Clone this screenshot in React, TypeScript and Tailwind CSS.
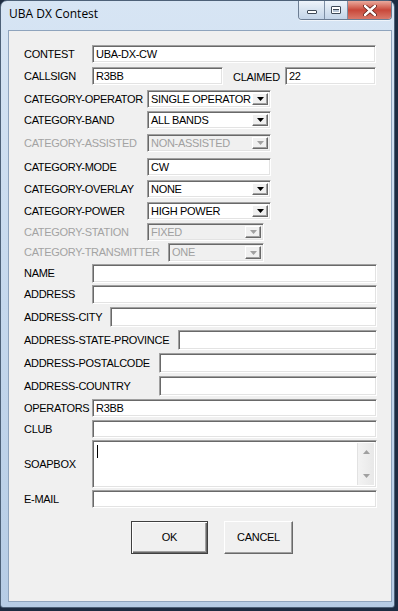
import React from 'react';

type Kind = 'input' | 'select';

type RowDef = {
  label: string;
  kind: Kind;
  value?: string;
  labelW: string;
  fieldW: string;
  h: string;
  mt: string;
  disabled?: boolean;
};

const rows: RowDef[] = [
  { label: 'CATEGORY-OPERATOR', kind: 'select', value: 'SINGLE OPERATOR', labelW: 'w-[123px]', fieldW: 'w-[124px]', h: 'h-[18px]', mt: 'mt-[5px]' },
  { label: 'CATEGORY-BAND', kind: 'select', value: 'ALL BANDS', labelW: 'w-[123px]', fieldW: 'w-[124px]', h: 'h-[18px]', mt: 'mt-[3px]' },
  { label: 'CATEGORY-ASSISTED', kind: 'select', value: 'NON-ASSISTED', labelW: 'w-[123px]', fieldW: 'w-[124px]', h: 'h-[18px]', mt: 'mt-[5px]', disabled: true },
  { label: 'CATEGORY-MODE', kind: 'input', value: 'CW', labelW: 'w-[123px]', fieldW: 'w-[124px]', h: 'h-[18px]', mt: 'mt-[6px]' },
  { label: 'CATEGORY-OVERLAY', kind: 'select', value: 'NONE', labelW: 'w-[123px]', fieldW: 'w-[124px]', h: 'h-[18px]', mt: 'mt-[4px]' },
  { label: 'CATEGORY-POWER', kind: 'select', value: 'HIGH POWER', labelW: 'w-[123px]', fieldW: 'w-[124px]', h: 'h-[18px]', mt: 'mt-[4px]' },
  { label: 'CATEGORY-STATION', kind: 'select', value: 'FIXED', labelW: 'w-[123px]', fieldW: 'w-[117px]', h: 'h-[18px]', mt: 'mt-[3px]', disabled: true },
  { label: 'CATEGORY-TRANSMITTER', kind: 'select', value: 'ONE', labelW: 'w-[144px]', fieldW: 'w-[96px]', h: 'h-[19px]', mt: 'mt-[2px]', disabled: true },
  { label: 'NAME', kind: 'input', labelW: 'w-[68px]', fieldW: 'w-[285px]', h: 'h-[19px]', mt: 'mt-[2px]' },
  { label: 'ADDRESS', kind: 'input', labelW: 'w-[68px]', fieldW: 'w-[285px]', h: 'h-[19px]', mt: 'mt-[2px]' },
  { label: 'ADDRESS-CITY', kind: 'input', labelW: 'w-[86px]', fieldW: 'w-[267px]', h: 'h-[20px]', mt: 'mt-[3px]' },
  { label: 'ADDRESS-STATE-PROVINCE', kind: 'input', labelW: 'w-[154px]', fieldW: 'w-[199px]', h: 'h-[20px]', mt: 'mt-[3px]' },
  { label: 'ADDRESS-POSTALCODE', kind: 'input', labelW: 'w-[135px]', fieldW: 'w-[218px]', h: 'h-[20px]', mt: 'mt-[3px]' },
  { label: 'ADDRESS-COUNTRY', kind: 'input', labelW: 'w-[135px]', fieldW: 'w-[218px]', h: 'h-[20px]', mt: 'mt-[3px]' },
  { label: 'OPERATORS', kind: 'input', value: 'R3BB', labelW: 'w-[68px]', fieldW: 'w-[285px]', h: 'h-[18px]', mt: 'mt-[3px]' },
  { label: 'CLUB', kind: 'input', labelW: 'w-[68px]', fieldW: 'w-[285px]', h: 'h-[18px]', mt: 'mt-[3px]' },
];

const sunken =
  'border border-t-[#a0a0a0] border-l-[#a0a0a0] border-b-white border-r-white shadow-[inset_1px_1px_0_#696969,inset_-1px_-1px_0_#e3e3e3]';

function Arrow({ up, disabled }: { up?: boolean; disabled?: boolean }) {
  return (
    <svg width="7" height="4" viewBox="0 0 7 4">
      <path d={up ? 'M3.5 0 L7 4 L0 4 Z' : 'M0 0 L7 0 L3.5 4 Z'} fill={disabled ? '#a0a0a0' : '#000'} />
    </svg>
  );
}

function TextBox({ value, w, h }: { value?: string; w: string; h: string }) {
  return (
    <div className={`${w} ${h} ${sunken} bg-white flex items-center pl-[3px] text-black`}>
      {value}
    </div>
  );
}

function Combo({ value, w, h, disabled }: { value?: string; w: string; h: string; disabled?: boolean }) {
  return (
    <div
      className={`${w} ${h} ${sunken} flex items-stretch p-[2px] ${
        disabled ? 'bg-[#f0f0f0] text-[#a0a0a0]' : 'bg-white text-black'
      }`}
    >
      <div className="flex-1 flex items-center pl-[1px] overflow-hidden whitespace-nowrap">{value}</div>
      <div className="w-[16px] shrink-0 bg-[#f0f0f0] border border-t-white border-l-white border-b-[#696969] border-r-[#696969] shadow-[inset_-1px_-1px_0_#a0a0a0] flex items-center justify-center">
        <Arrow disabled={disabled} />
      </div>
    </div>
  );
}

function Label({ text, w, disabled }: { text: string; w: string; disabled?: boolean }) {
  return (
    <div className={`${w} shrink-0 whitespace-nowrap ${disabled ? 'text-[#a3a3a3]' : 'text-black'}`}>{text}</div>
  );
}

export default function App() {
  return (
    <div className="w-[398px] h-[611px] bg-[#1d2c42] font-['Liberation_Sans',Arial,sans-serif] text-[11px] tracking-[-0.3px] leading-none overflow-hidden">
      <div className="w-[395px] h-[608px] rounded-t-[7px] rounded-b-[3px] border border-[#4d6178] bg-gradient-to-b from-[#d7e5f4] via-[#c5d8ed] to-[#b6cce5] flex flex-col pl-[7px] pr-[2px] pb-[5px]">
        {/* title bar */}
        <div className="h-[29px] flex items-start shrink-0">
          <div className="pt-[7px] pl-[1px] font-['Open_Sans',sans-serif] text-[12px] tracking-normal text-black">UBA DX Contest</div>
          <div className="ml-auto flex h-[19px] border border-t-0 border-[#6c7d93] rounded-b-[4px] overflow-hidden shadow-[0_1px_0_rgba(255,255,255,0.6)]">
            <div className="w-[26px] bg-gradient-to-b from-[#eef4fb] via-[#d7e3f0] to-[#c3d4e8] border-r border-[#7d8ea4] flex items-center justify-center pt-[4px]">
              <div className="w-[10px] h-[4px] bg-white border border-[#3f4a58] rounded-[1px]" />
            </div>
            <div className="w-[23px] bg-gradient-to-b from-[#eef4fb] via-[#d7e3f0] to-[#c3d4e8] border-r border-[#7d8ea4] flex items-center justify-center">
              <div className="w-[10px] h-[8px] border border-[#3f4a58] bg-white rounded-[1px] flex items-center justify-center">
                <div className="w-[6px] h-[3px] bg-[#b8c6d6] border-t border-[#3f4a58]" />
              </div>
            </div>
            <div className="w-[43px] bg-gradient-to-b from-[#e9a99d] via-[#c8473a] to-[#d9796b] flex items-center justify-center">
              <svg width="14" height="11" viewBox="0 0 14 11">
                <path d="M2 1 L12 10 M12 1 L2 10" stroke="#5a1a14" strokeWidth="4" strokeLinecap="round" />
                <path d="M2 1 L12 10 M12 1 L2 10" stroke="#ffffff" strokeWidth="2.4" strokeLinecap="round" />
              </svg>
            </div>
          </div>
        </div>

        {/* client area */}
        <div className="flex-1 border border-[#8fa4bd] bg-[#f0f0f0] flex flex-col pl-[15px]">
          <div className="mt-[14px] h-[18px] flex items-center">
            <Label text="CONTEST" w="w-[68px]" />
            <TextBox value="UBA-DX-CW" w="w-[284px]" h="h-[18px]" />
          </div>
          <div className="mt-[4px] h-[18px] flex items-center">
            <Label text="CALLSIGN" w="w-[68px]" />
            <TextBox value="R3BB" w="w-[131px]" h="h-[18px]" />
            <div className="ml-[10px] w-[52px] pt-[2px]">CLAIMED</div>
            <TextBox value="22" w="w-[91px]" h="h-[18px]" />
          </div>

          {rows.map((r) => (
            <div key={r.label} className={`${r.mt} ${r.h} flex items-center`}>
              <Label text={r.label} w={r.labelW} disabled={r.disabled} />
              {r.kind === 'select' ? (
                <Combo value={r.value} w={r.fieldW} h={r.h} disabled={r.disabled} />
              ) : (
                <TextBox value={r.value} w={r.fieldW} h={r.h} />
              )}
            </div>
          ))}

          <div className="mt-[2px] h-[48px] flex items-center">
            <Label text="SOAPBOX" w="w-[68px]" />
            <div className={`w-[285px] h-[48px] ${sunken} bg-white flex p-[2px]`}>
              <div className="flex-1 pl-[2px] pt-[2px]">
                <div className="w-[1px] h-[13px] bg-black" />
              </div>
              <div className="w-[17px] bg-gradient-to-r from-[#f3f3f3] to-[#e8e8e8] border-l border-[#e2e2e2] flex flex-col items-center justify-between py-[7px]">
                <Arrow up disabled />
                <Arrow disabled />
              </div>
            </div>
          </div>
          <div className="mt-[2px] h-[18px] flex items-center">
            <Label text="E-MAIL" w="w-[68px]" />
            <TextBox w="w-[285px]" h="h-[18px]" />
          </div>

          <div className="mt-[13px] flex gap-[16px] pl-[107px]">
            <div className="w-[77px] h-[33px] border border-[#404040] bg-[#f0f0f0] shadow-[inset_1px_1px_0_#ffffff,inset_-1px_-1px_0_#696969,inset_-2px_-2px_0_#a0a0a0] flex items-center justify-center">
              OK
            </div>
            <div className="w-[69px] h-[33px] border border-t-white border-l-white border-b-[#696969] border-r-[#696969] bg-[#f0f0f0] shadow-[inset_-1px_-1px_0_#a0a0a0] flex items-center justify-center">
              CANCEL
            </div>
          </div>
        </div>
      </div>
    </div>
  );
}
